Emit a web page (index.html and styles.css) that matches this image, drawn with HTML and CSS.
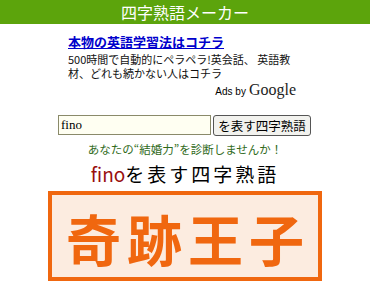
FILE: index.html
```
<!DOCTYPE html>
<html lang="ja">
  <head>
    <meta charset="UTF-8" />
    <meta name="viewport" content="width=device-width, initial-scale=1.0" />
    <title>四字熟語メーカー</title>
    <link rel="stylesheet" href="styles.css">
  </head>
  <body>
    <div class="header">四字熟語メーカー</div>
    <div class="ad">
      <a class="ad-title" href="#">本物の英語学習法はコチラ</a>
      <p class="ad-text">500時間で自動的にペラペラ!英会話、 英語教材、どれも続かない人はコチラ</p>
      <div class="ad-by">Ads by <span class="google">Google</span></div>
    </div>
    <form class="search" onsubmit="return false">
      <input type="text" class="search-input" value="fino" />
      <button class="search-button">を表す四字熟語</button>
    </form>
    <p class="promo">あなたの“結婚力”を診断しませんか！</p>
    <h1 class="result-title"><span class="name">fino</span>を表す四字熟語</h1>
    <div class="result-box">奇跡王子</div>
  </body>
</html>
```
FILE: styles.css
```
* {
  box-sizing: border-box;
}

body {
  margin: 0;
  width: 370px;
  background: #fff;
  font-family: "Noto Sans CJK JP", "Noto Sans", sans-serif;
  color: #000;
}

p,
h1 {
  margin: 0;
}

.header {
  height: 24px;
  background: #5ca40c;
  color: #fff;
  font-size: 16px;
  line-height: 24px;
  text-align: center;
}

.ad {
  margin: 10px 0 0 68px;
  width: 232px;

  .ad-title {
    display: block;
    margin-bottom: 4px;
    color: #0000cc;
    font-size: 13px;
    font-weight: bold;
    line-height: 15px;
  }

  .ad-text {
    font-size: 11px;
    line-height: 13.5px;
    color: #111;
  }

  .ad-by {
    display: flex;
    justify-content: flex-end;
    align-items: baseline;
    gap: 3px;
    margin: 2px 0 0 120px;
    height: 15px;
    font-family: "Liberation Sans", sans-serif;
    font-size: 10px;
    line-height: 15px;
    padding-right: 4px;

    .google {
      font-family: "Liberation Serif", serif;
      font-size: 16px;
      line-height: 15px;
      color: #222;
    }
  }
}

.search {
  display: flex;
  gap: 2px;
  margin: 18px 0 0 58px;

  .search-input {
    width: 153px;
    height: 20px;
    border: 1px solid #8a8a6a;
    background: #fffff2;
    font-family: "Liberation Serif", serif;
    font-size: 13px;
    padding: 0 2px;
  }

  .search-button {
    height: 21px;
    width: 98px;
    border: 1px solid #555;
    border-radius: 3px;
    background: #f2f2ee;
    font-family: "Noto Sans CJK JP", sans-serif;
    font-size: 12.5px;
    line-height: 18px;
    padding: 0;
  }
}

.promo {
  margin-top: 5px;
  text-align: center;
  color: #2f6a1a;
  font-size: 11.5px;
  line-height: 16px;
}

.result-title {
  margin-top: 5px;
  text-align: center;
  font-size: 19px;
  font-weight: normal;
  letter-spacing: 3px;
  line-height: 24px;

  .name {
    color: #990f0f;
    letter-spacing: 0;
  }
}

.result-box {
  margin: 5px 0 0 48px;
  width: 274px;
  height: 90px;
  border: 4px solid #f0670f;
  background: #fcece0;
  color: #f0670f;
  font-size: 55px;
  font-weight: bold;
  letter-spacing: 6px;
  text-indent: 6px;
  line-height: 84px;
  text-align: center;
}
```
